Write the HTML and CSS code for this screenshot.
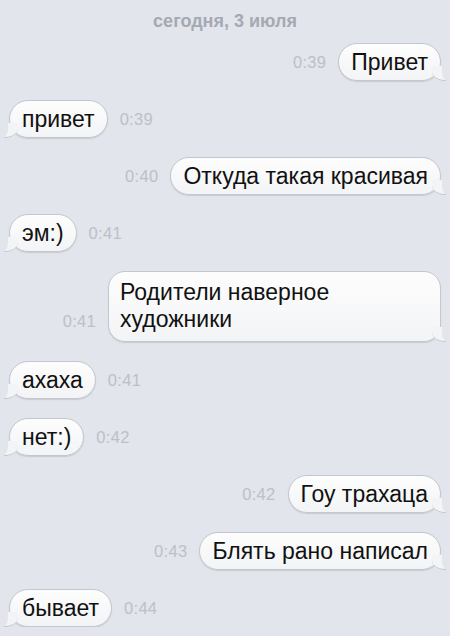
FILE: index.html
```html
<!DOCTYPE html>
<html lang="ru">
<head>
  <meta charset="UTF-8">
  <meta name="viewport" content="width=device-width, initial-scale=1.0">
  <title>Сообщения</title>
  <link rel="stylesheet" href="styles.css">
</head>
<body>
  <main class="chat">
    <div class="day">сегодня, 3 июля</div>

    <div class="row out">
      <span class="time">0:39</span>
      <div class="bubble">Привет</div>
    </div>
    <div class="row in">
      <div class="bubble">привет</div>
      <span class="time">0:39</span>
    </div>
    <div class="row out">
      <span class="time">0:40</span>
      <div class="bubble">Откуда такая красивая</div>
    </div>
    <div class="row in">
      <div class="bubble">эм:)</div>
      <span class="time">0:41</span>
    </div>
    <div class="row out tall">
      <span class="time">0:41</span>
      <div class="bubble">Родители наверное художники</div>
    </div>
    <div class="row in">
      <div class="bubble">ахаха</div>
      <span class="time">0:41</span>
    </div>
    <div class="row in">
      <div class="bubble">нет:)</div>
      <span class="time">0:42</span>
    </div>
    <div class="row out">
      <span class="time">0:42</span>
      <div class="bubble">Гоу трахаца</div>
    </div>
    <div class="row out">
      <span class="time">0:43</span>
      <div class="bubble">Блять рано написал</div>
    </div>
    <div class="row in">
      <div class="bubble">бывает</div>
      <span class="time">0:44</span>
    </div>
  </main>
</body>
</html>
```

FILE: styles.css
```css
:root {
  --bg:#e2e5eb;
  --edge:#c3c7cf;
  --muted:#bcc0c8;
}
*{box-sizing:border-box;margin:0;padding:0}
body{
  background:var(--bg);
  font-family:"Liberation Sans",Arial,sans-serif;
  color:#111;
  overflow:hidden;
}
.chat{display:flex;flex-direction:column;gap:19px;padding:11px 9px 0 9px}

.day{text-align:center;font-size:18px;font-weight:700;color:#a5a9b2;margin-bottom:-9px;height:22px}

/* rows */
.row{display:flex;align-items:center;gap:12px}
.row.out{justify-content:flex-end}
.row.tall{align-items:flex-end}
.row.tall .time{margin-bottom:11px}

.time{font-size:16.5px;color:var(--muted);letter-spacing:.3px}

/* bubbles */
.bubble{
  position:relative;
  background:linear-gradient(#fdfdfd,#f3f4f6);
  border:1px solid var(--edge);
  border-radius:19px;
  padding:0 12px;
  min-height:38px;
  display:flex;align-items:center;
  font-size:23px;line-height:27px;
  box-shadow:0 1px 1px rgba(120,125,135,.25);
}
.tall .bubble{width:333px;padding:7px 110px 8px 11px;border-radius:17px;display:block}

/* tails */
.bubble::before{
  content:"";position:absolute;bottom:-1px;width:14px;height:14px;
  background:#f3f4f6;
}
.bubble::after{
  content:"";position:absolute;bottom:-2px;width:10px;height:16px;
  background:var(--bg);
}
.out .bubble::before{right:-6px;border-bottom-left-radius:12px 10px;border-bottom:1px solid var(--edge)}
.out .bubble::after{right:-12px;border-bottom-left-radius:8px 10px}
.in .bubble::before{left:-6px;border-bottom-right-radius:12px 10px;border-bottom:1px solid var(--edge)}
.in .bubble::after{left:-12px;border-bottom-right-radius:8px 10px}
```
